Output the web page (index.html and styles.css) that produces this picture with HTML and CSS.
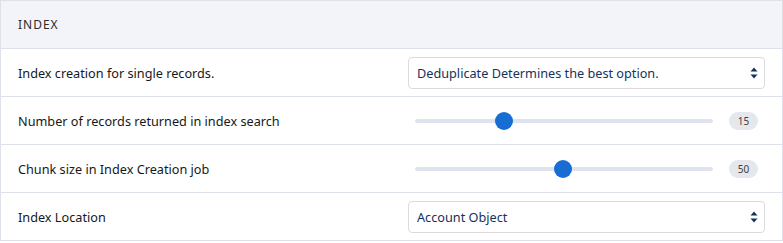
FILE: index.html
```html
<!DOCTYPE html>
<html>
<head>
    <title>Index Settings</title>
    <link rel="stylesheet" href="styles.css">
</head>
<body>
    <div class="panel">
        <div class="panel-header">INDEX</div>

        <div class="row">
            <label class="label" for="index-creation">Index creation for single records.</label>
            <div class="select-wrap">
                <select id="index-creation" class="select">
                    <option>Deduplicate Determines the best option.</option>
                    <option>Always</option>
                    <option>Never</option>
                </select>
                <svg class="select-arrows" width="8" height="12" viewBox="0 0 8 12">
                    <path d="M4 0.5 L7.5 4.5 L0.5 4.5 Z" />
                    <path d="M4 11.5 L7.5 7.5 L0.5 7.5 Z" />
                </svg>
            </div>
        </div>

        <div class="row">
            <label class="label" for="records-returned">Number of records returned in index search</label>
            <div class="slider">
                <input id="records-returned" class="range" type="range" min="1" max="50" value="15">
                <span class="badge">15</span>
            </div>
        </div>

        <div class="row">
            <label class="label" for="chunk-size">Chunk size in Index Creation job</label>
            <div class="slider">
                <input id="chunk-size" class="range" type="range" min="1" max="100" value="50">
                <span class="badge">50</span>
            </div>
        </div>

        <div class="row">
            <label class="label" for="index-location">Index Location</label>
            <div class="select-wrap">
                <select id="index-location" class="select">
                    <option>Account Object</option>
                    <option>Custom Object</option>
                </select>
                <svg class="select-arrows" width="8" height="12" viewBox="0 0 8 12">
                    <path d="M4 0.5 L7.5 4.5 L0.5 4.5 Z" />
                    <path d="M4 11.5 L7.5 7.5 L0.5 7.5 Z" />
                </svg>
            </div>
        </div>
    </div>
</body>
</html>
```

FILE: styles.css
```css
body {
    font-family: "Noto Sans", Arial, sans-serif;
    margin: 0;
    padding: 0;
    background-color: #fff;
    color: #181818;
}
.panel {
    border: 1px solid #dde1ea;
    background-color: #fff;
}
.panel-header {
    height: 47px;
    display: flex;
    align-items: center;
    padding: 0 18px 0 17px;
    background-color: #f3f4f9;
    border-bottom: 1px solid #dde1ea;
    font-size: 12px;
    letter-spacing: 1px;
    color: #2b2b2b;
}
.row {
    height: 47px;
    display: grid;
    grid-template-columns: 1fr 357px;
    align-items: center;
    padding: 0 17px 0 17px;
    border-bottom: 1px solid #dde1ea;
}
.row:last-child {
    border-bottom: none;
}
.label {
    font-size: 12.7px;
    color: #181818;
}
.select-wrap {
    position: relative;
}
.select {
    -webkit-appearance: none;
    appearance: none;
    width: 100%;
    height: 32px;
    padding: 0 24px 0 8px;
    border: 1px solid #dddbda;
    border-radius: 4px;
    background-color: #fff;
    font-family: "Noto Sans", Arial, sans-serif;
    font-size: 12.7px;
    color: #16325c;
}
.select-arrows {
    position: absolute;
    right: 7px;
    top: 10px;
    fill: #16325c;
    pointer-events: none;
}
.slider {
    display: flex;
    align-items: center;
    padding: 0 7px;
    gap: 16px;
}
.range {
    -webkit-appearance: none;
    appearance: none;
    flex: 1;
    height: 4px;
    margin: 0;
    border-radius: 2px;
    background-color: #dfe3ee;
}
.range::-webkit-slider-thumb {
    -webkit-appearance: none;
    width: 18px;
    height: 18px;
    border-radius: 50%;
    background-color: #176dd3;
    border: none;
}
.badge {
    width: 29px;
    height: 18px;
    line-height: 18px;
    text-align: center;
    border-radius: 9px;
    background-color: #e4e7ee;
    font-size: 10px;
    color: #3e3e3c;
}
```
